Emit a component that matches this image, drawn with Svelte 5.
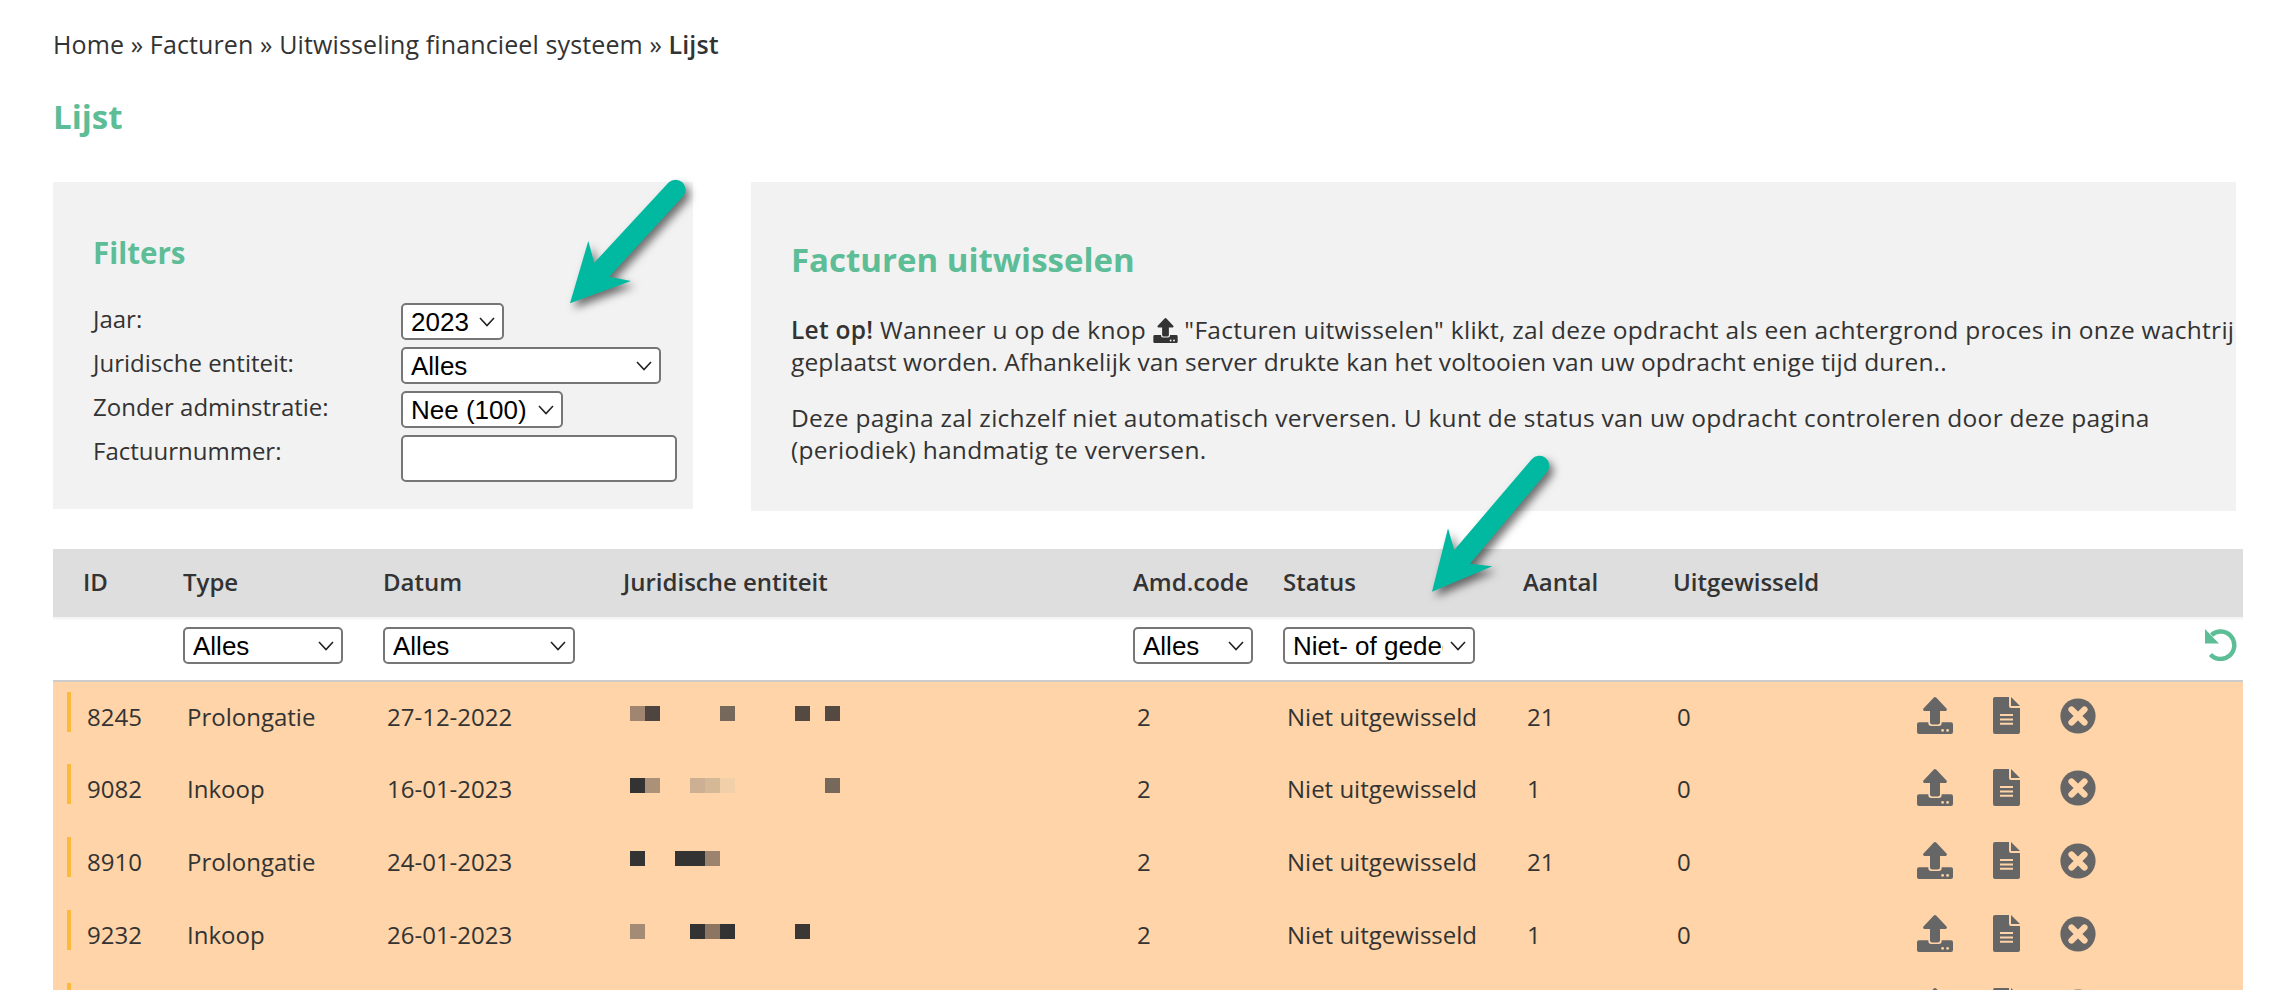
<script>
    const dark = "#333333";
    const rows = [
        {
            id: 8245, type: "Prolongatie", date: "27-12-2022", amd: 2, status: "Niet uitgewisseld", count: 21, done: 0,
            blur: [[0, "#a08670"], [1, "#4f4540"], [6, "#76685a"], [11, "#554a42"], [13, "#554a42"]],
        },
        {
            id: 9082, type: "Inkoop", date: "16-01-2023", amd: 2, status: "Niet uitgewisseld", count: 1, done: 0,
            blur: [[0, dark], [1, "#ac9179"], [4, "#cdb093"], [5, "#d5b896"], [6, "#f0cfa9"], [13, "#76685a"]],
        },
        {
            id: 8910, type: "Prolongatie", date: "24-01-2023", amd: 2, status: "Niet uitgewisseld", count: 21, done: 0,
            blur: [[0, dark], [3, dark], [4, dark], [5, "#9b836d"]],
        },
        {
            id: 9232, type: "Inkoop", date: "26-01-2023", amd: 2, status: "Niet uitgewisseld", count: 1, done: 0,
            blur: [[0, "#a48b75"], [4, dark], [5, "#8c7662"], [6, dark], [11, "#3b3735"]],
        },
        { id: "", type: "", date: "", amd: "", status: "", count: "", done: "", blur: [] },
    ];
</script>

{#snippet uploadIcon(size)}
    <svg class="upload" width={size} height={size} viewBox="0 0 36 37" fill="currentColor" fill-rule="evenodd">
        <path d="M16.6 .7 a2 2 0 0 1 2.8 0 L29.5 11.5 a1.5 1.5 0 0 1 -1 2.5 H23 V25 a2.5 2.5 0 0 1 -2.5 2.5 h-5 A2.5 2.5 0 0 1 13 25 V14 H7.5 a1.5 1.5 0 0 1 -1 -2.5 Z" />
        <path d="M2 25.3 H11.3 V26 a3 3 0 0 0 3 3 h7.4 a3 3 0 0 0 3 -3 V25.3 H34 a2 2 0 0 1 2 2 V35 a2 2 0 0 1 -2 2 H2 a2 2 0 0 1 -2 -2 V27.3 a2 2 0 0 1 2 -2 Z M24.2 33.4 a1.4 1.4 0 1 0 2.8 0 a1.4 1.4 0 1 0 -2.8 0 Z M29.2 33.4 a1.4 1.4 0 1 0 2.8 0 a1.4 1.4 0 1 0 -2.8 0 Z" />
    </svg>
{/snippet}

<div class="page">
    <nav class="crumbs">Home » Facturen » Uitwisseling financieel systeem » <b>Lijst</b></nav>
    <h1>Lijst</h1>

    <div class="panels">
        <section class="filters">
            <h3>Filters</h3>
            <div class="filter-grid">
                <label for="jaar">Jaar:</label>
                <select id="jaar" class="sel-year"><option>2023</option></select>
                <label for="entiteit">Juridische entiteit:</label>
                <select id="entiteit" class="sel-entity"><option>Alles</option></select>
                <label for="admin">Zonder adminstratie:</label>
                <select id="admin" class="sel-admin"><option>Nee (100)</option></select>
                <label for="nummer">Factuurnummer:</label>
                <input id="nummer" type="text" />
            </div>
        </section>

        <section class="exchange">
            <h2>Facturen uitwisselen</h2>
            <p>
                <b>Let op!</b> Wanneer u op de knop {@render uploadIcon(25)} "Facturen uitwisselen" klikt, zal deze opdracht als een achtergrond proces in onze wachtrij<br />
                <span class="tight">geplaatst worden. Afhankelijk van server drukte kan het voltooien van uw opdracht enige tijd duren..</span>
            </p>
            <p>
                Deze pagina zal zichzelf niet automatisch verversen. U kunt de status van uw opdracht controleren door deze pagina<br />
                (periodiek) handmatig te verversen.
            </p>
        </section>
    </div>

    <table>
        <colgroup>
            <col style="width: 130px" />
            <col style="width: 200px" />
            <col style="width: 240px" />
            <col style="width: 510px" />
            <col style="width: 150px" />
            <col style="width: 240px" />
            <col style="width: 150px" />
            <col style="width: 244px" />
            <col />
        </colgroup>
        <thead>
            <tr class="head">
                <th class="first">ID</th>
                <th>Type</th>
                <th>Datum</th>
                <th>Juridische entiteit</th>
                <th>Amd.code</th>
                <th>Status</th>
                <th>Aantal</th>
                <th>Uitgewisseld</th>
                <th></th>
            </tr>
            <tr class="filter-row">
                <td></td>
                <td><select class="sel-type"><option>Alles</option></select></td>
                <td><select class="sel-date"><option>Alles</option></select></td>
                <td></td>
                <td><select class="sel-amd"><option>Alles</option></select></td>
                <td><select class="sel-status"><option>Niet- of gedeeltelijk uitgewisseld</option></select></td>
                <td></td>
                <td></td>
                <td class="reset">
                    <svg width="32" height="32" viewBox="0 0 32 32">
                        <path d="M6.5 6 A13.7 13.7 0 1 1 5.5 25.5" fill="none" stroke="#5cbd97" stroke-width="4.4" />
                        <path d="M0 0 V14.5 H14 Z" fill="#5cbd97" />
                    </svg>
                </td>
            </tr>
        </thead>
        <tbody>
            {#each rows as row}
                <tr>
                    <td class="id-cell">
                        <div class="id-wrap">
                            <span class="bar"></span>
                            <span class="id">{row.id}</span>
                        </div>
                    </td>
                    <td>{row.type}</td>
                    <td>{row.date}</td>
                    <td class="blur-cell">
                        <div class="blur">
                            {#each row.blur as [col, colour]}
                                <span style="grid-column: {col + 1}; background: {colour}"></span>
                            {/each}
                        </div>
                    </td>
                    <td>{row.amd}</td>
                    <td>{row.status}</td>
                    <td>{row.count}</td>
                    <td>{row.done}</td>
                    <td class="actions">
                        <div class="icons">
                            {@render uploadIcon(37)}
                            <svg width="27" height="37" viewBox="0 0 27 37" fill="currentColor" fill-rule="evenodd">
                                <path d="M2 0 H16 V9 a2 2 0 0 0 2 2 H27 V35 a2 2 0 0 1 -2 2 H2 a2 2 0 0 1 -2 -2 V2 a2 2 0 0 1 2 -2 Z M7 17 V19 H20 V17 Z M7 21.4 V23.4 H20 V21.4 Z M7 25.8 V27.8 H20 V25.8 Z" />
                                <path d="M18 0 L27 9 H18 Z" />
                            </svg>
                            <svg class="remove" width="36" height="36" viewBox="0 0 36 36">
                                <circle cx="18" cy="18" r="17.6" fill="currentColor" />
                                <path d="M11.5 11.5 L24.5 24.5 M24.5 11.5 L11.5 24.5" stroke="#fed4a8" stroke-width="6.2" stroke-linecap="round" />
                            </svg>
                        </div>
                    </td>
                </tr>
            {/each}
        </tbody>
    </table>

    <svg class="arrow arrow-one" width="160" height="150" viewBox="0 0 160 150">
        <path d="M20 133.3 L38.3 71 L44.3 92.7 L118.6 12.6 A10 10 0 0 1 133.4 26 L59.3 106.7 L81 111 Z" fill="#00b9a0" />
    </svg>
    <svg class="arrow arrow-two" width="160" height="160" viewBox="0 0 160 160">
        <path d="M22 146.7 L38 83.3 L44.3 105 L121.7 14.2 A10 10 0 0 1 136.9 27.2 L60 118.7 L82.3 121.3 Z" fill="#00b9a0" />
    </svg>
</div>

<style>
    :global(body) {
        overflow: hidden;
        background: #fff;
    }

    .page {
        position: relative;
        width: 2190px;
        padding: 28px 0 0 53px;
        font-family: "Open Sans", sans-serif;
        font-size: 24px;
        line-height: 32px;
        color: #333;
    }

    .crumbs {
        font-size: 25px;
        letter-spacing: 0.12px;
    }

    .crumbs b,
    .exchange b {
        font-weight: 600;
    }

    h1 {
        margin: 36px 0 0;
        font-size: 33px;
        line-height: 42px;
        font-weight: 700;
        color: #5cbd97;
    }

    .panels {
        display: flex;
        align-items: flex-start;
        gap: 58px;
        margin-top: 44px;
    }

    .filters {
        box-sizing: border-box;
        width: 640px;
        height: 327px;
        padding: 54px 0 0 40px;
        background: #f2f2f2;
    }

    h3 {
        margin: 0;
        font-size: 29.5px;
        line-height: 34px;
        font-weight: 700;
        color: #5cbd97;
    }

    .filter-grid {
        display: grid;
        grid-template-columns: 308px auto;
        justify-content: start;
        justify-items: start;
        row-gap: 7px;
        margin-top: 33px;
    }

    select,
    input {
        display: block;
        box-sizing: border-box;
        height: 37px;
        border: 2px solid #767676;
        border-radius: 5px;
        background-color: #fff;
        color: #000;
        font-family: "Liberation Sans", Arial, sans-serif;
        font-size: 26px;
        margin: 0;
    }

    select {
        appearance: none;
        padding: 0 30px 0 8px;
        background-image: url("data:image/svg+xml,%3Csvg xmlns='http://www.w3.org/2000/svg' width='16' height='10'%3E%3Cpath d='M1 1 L8 8.5 L15 1' fill='none' stroke='%23222' stroke-width='1.6'/%3E%3C/svg%3E");
        background-repeat: no-repeat;
        background-position: right 7px center;
    }

    input {
        width: 276px;
        height: 47px;
    }

    .sel-year { width: 103px; }
    .sel-entity { width: 260px; }
    .sel-admin { width: 162px; }
    .sel-type { width: 160px; }
    .sel-date { width: 192px; }
    .sel-amd { width: 120px; }
    .sel-status { width: 192px; }

    .exchange {
        box-sizing: border-box;
        width: 1485px;
        height: 329px;
        padding: 55px 0 0 40px;
        background: #f2f2f2;
        white-space: nowrap;
        overflow: hidden;
    }

    h2 {
        margin: 0;
        font-size: 33px;
        line-height: 46px;
        font-weight: 700;
        color: #5cbd97;
    }

    .exchange p {
        margin: 0;
        font-size: 24.5px;
        letter-spacing: 0.28px;
    }

    .exchange .tight {
        letter-spacing: 0.11px;
    }

    .exchange p:first-of-type {
        margin-top: 31px;
    }

    .exchange p + p {
        margin-top: 24px;
    }

    .upload {
        vertical-align: -4px;
    }

    table {
        width: 2190px;
        margin-top: 38px;
        border-collapse: collapse;
        table-layout: fixed;
    }

    th {
        box-sizing: border-box;
        height: 68px;
        padding: 0 0 2px;
        background: #dedede;
        font-weight: 600;
        text-align: left;
    }

    th.first {
        padding-left: 30px;
    }

    .filter-row td {
        box-sizing: border-box;
        height: 64px;
        padding: 10px 0 0;
        vertical-align: top;
        background: #fff;
        border-bottom: 2px solid #ccc;
        box-shadow: inset 0 4px 3px -2px rgba(0, 0, 0, 0.06);
    }

    .filter-row td.reset {
        padding: 12px 6px 0 0;
        text-align: right;
    }

    tbody tr {
        height: 73px;
        background: #fed4a8;
    }

    tbody td {
        padding: 19px 0 0 4px;
        vertical-align: top;
        white-space: nowrap;
    }

    tbody td.id-cell {
        padding: 10px 0 0 14px;
    }

    .id-wrap {
        display: flex;
    }

    .bar {
        width: 4px;
        height: 40px;
        background: #fbb93e;
    }

    .id {
        margin: 9px 0 0 16px;
    }

    tbody td.blur-cell {
        padding: 24px 0 0 7px;
    }

    .blur {
        display: grid;
        grid-template-columns: repeat(14, 15px);
        grid-auto-rows: 15px;
    }

    .blur span {
        grid-row: 1;
    }

    tbody td.actions {
        padding: 15px 0 0;
    }

    .icons {
        display: flex;
        align-items: flex-start;
        gap: 40px;
        color: #666;
    }

    .icons .upload {
        width: 36px;
    }

    .remove {
        margin-top: 1px;
    }

    .arrow {
        position: absolute;
        filter: drop-shadow(4px 5px 4px rgba(0, 0, 0, 0.55));
    }

    .arrow-one {
        left: 550px;
        top: 170px;
    }

    .arrow-two {
        left: 1410px;
        top: 445px;
    }
</style>
